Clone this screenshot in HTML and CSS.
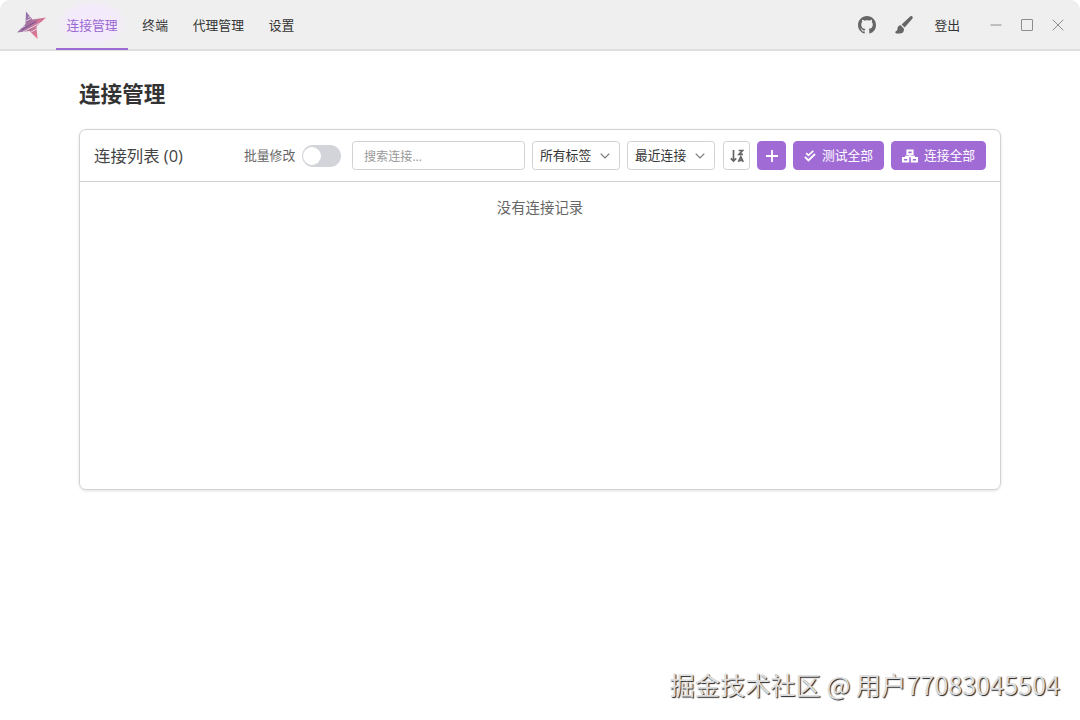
FILE: index.html
```html
<!DOCTYPE html>
<html lang="zh-CN">
<head>
    <meta charset="UTF-8">
    <meta name="viewport" content="width=device-width, initial-scale=1.0">
    <title>连接管理</title>
    <link rel="stylesheet" href="styles.css">
</head>
<body>
    <!-- 标题栏 -->
    <header class="titlebar">
        <svg class="logo" viewBox="0 0 30 30">
            <defs>
                <linearGradient id="star" x1="0" y1="0" x2="1" y2="0.6">
                    <stop offset="0.1" stop-color="#8379bd"/>
                    <stop offset="0.45" stop-color="#a0719f"/>
                    <stop offset="0.85" stop-color="#df7791"/>
                </linearGradient>
            </defs>
            <path d="M10 1.500 L16.500 9.500 L30 7.500 L20.500 16.500 L21.500 29 L13.500 21 L1 22.500 L9.500 14 Z" fill="url(#star)"/>
            <path d="M2 19.500 L9 16 M7 22 L25 12.500 M12 7.500 L17 5 M10 11 L15 8.500 M15 22 L24 17.500" fill="none" stroke="#efe6f1" stroke-width="0.8"/>
            <path d="M6 19.500 L20 11.500" fill="none" stroke="#744f93" stroke-width="1"/>
        </svg>
        <nav class="nav">
            <a class="nav-item active">连接管理</a>
            <a class="nav-item">终端</a>
            <a class="nav-item">代理管理</a>
            <a class="nav-item">设置</a>
        </nav>
        <div class="actions">
            <svg class="github" viewBox="0 0 16 16"><path d="M8 0C3.580 0 0 3.580 0 8c0 3.540 2.290 6.530 5.470 7.590.4.070.55-.17.55-.38 0-.19-.01-.82-.01-1.490-2.010.37-2.530-.49-2.690-.94-.09-.23-.48-.94-.82-1.130-.28-.15-.68-.52-.01-.53.63-.01 1.080.58 1.230.82.72 1.210 1.870.87 2.330.66.070-.52.28-.87.51-1.070-1.780-.2-3.640-.89-3.640-3.950 0-.87.31-1.590.82-2.150-.08-.2-.36-1.020.08-2.120 0 0 .67-.21 2.200.82.64-.18 1.320-.27 2-.27s1.360.09 2 .27c1.530-1.040 2.200-.82 2.200-.82.44 1.100.16 1.920.08 2.120.51.56.82 1.270.82 2.150 0 3.070-1.870 3.750-3.650 3.950.29.25.54.73.54 1.480 0 1.070-.01 1.930-.01 2.200 0 .21.15.46.55.38A8.010 8.010 0 0 0 16 8c0-4.420-3.580-8-8-8z"/></svg>
            <svg class="brush" viewBox="0 0 18 18"><path d="M17.300.5c-.6-.6-1.500-.5-2.200.1L6.600 8.500l3 3L17.300 2.700c.6-.7.600-1.600 0-2.200z"/><path d="M5.700 9.300c-2 0-3 1.300-3.200 3.200-.1 1.400-.4 2.300-1.600 2.700-.8.300-.9 2 .4 2.200h4.300c2.200-.1 3.500-1.800 3.400-4.700z"/></svg>
            <a class="logout">登出</a>
        </div>
        <div class="window-buttons">
            <svg viewBox="0 0 12 12"><path d="M.5 6h11"/></svg>
            <svg viewBox="0 0 12 12"><rect x=".5" y=".5" width="11" height="11" rx=".5"/></svg>
            <svg viewBox="0 0 12 12"><path d="M.7.7l10.600 10.600M11.300.7L.7 11.300"/></svg>
        </div>
    </header>

    <main class="page">
        <h1>连接管理</h1>

        <section class="card">
            <div class="card-header">
                <h2>连接列表 (0)</h2>
                <span class="batch-label">批量修改</span>
                <span class="switch"></span>
                <input class="search" type="text" placeholder="搜索连接...">
                <div class="select"><span>所有标签</span>
                    <svg viewBox="0 0 10 6"><path d="M.7.7L5 5 9.300.7"/></svg>
                </div>
                <div class="select"><span>最近连接</span>
                    <svg viewBox="0 0 10 6"><path d="M.7.7L5 5 9.300.7"/></svg>
                </div>
                <button class="btn-sort">
                    <svg viewBox="0 0 14 14"><path d="M3.500 1v11M.8 9.300l2.700 2.800 2.700-2.800M8.700 1.500h3.800L9 5.300h4M8.400 12.800l2.400-5 2.400 5M9.400 11.300h3"/></svg>
                </button>
                <button class="btn btn-add">
                    <svg viewBox="0 0 12 12"><path d="M6 0v12M0 6h12"/></svg>
                </button>
                <button class="btn btn-test">
                    <svg viewBox="0 0 12 12"><path d="M2.200 3.200l2.200 2.100L9.300.9M.9 6.900l3.500 3.500L11.100 4"/></svg>
                    <span>测试全部</span>
                </button>
                <button class="btn btn-connect">
                    <svg viewBox="0 0 16 14"><path class="line" d="M8 5v2.500M3.700 9.500v-2h8.600v2"/><path class="boxes" d="M5.400 1.400h5.200v3.800H5.400zM1 8.900h5.200v3.700H1zM9.800 8.900H15v3.700H9.800z"/></svg>
                    <span>连接全部</span>
                </button>
            </div>
            <div class="empty">没有连接记录</div>
        </section>
    </main>

    <div class="watermark">掘金技术社区 @ 用户77083045504</div>
</body>
</html>
```

FILE: styles.css
```css
* {
    box-sizing: border-box;
}

body {
    margin: 0;
    height: 720px;
    background: #fff;
    color: #333;
    font-family: "Open Sans", "Noto Sans CJK SC", sans-serif;
    font-size: 12.8px;
    overflow: hidden;
}

svg {
    display: block;
    flex: none;
}

/* 标题栏 */
.titlebar {
    display: flex;
    align-items: center;
    height: 51px;
    padding: 0 16px 0 16px;
    background: #efefef;
    border-bottom: 2px solid #dedede;
    border-radius: 10px 10px 0 0;
}

.logo {
    width: 30px;
    height: 30px;
    margin-right: 10px;
}

.nav {
    display: flex;
    gap: 4px;
    height: 51px;
}

.nav-item {
    padding: 1px 10.4px 0;
    height: 51px;
    line-height: 50px;
}

.nav-item.active {
    color: #9b69d2;
    background: radial-gradient(ellipse closest-side, #f5e9ff, #f3ebfa 70%, #efefef);
    border-bottom: 2px solid #9f6bd5;
}

.actions {
    display: flex;
    align-items: center;
    margin-left: auto;
    fill: #666;
}

.github {
    width: 18px;
    height: 18px;
    margin-right: 19px;
    margin-left: 1px;
}

.brush {
    width: 18px;
    height: 18px;
    margin-right: 21px;
}

.window-buttons {
    display: flex;
    gap: 19px;
    margin-left: 30px;
}

.window-buttons svg {
    width: 12px;
    height: 12px;
    fill: none;
    stroke: #8c8c8c;
    stroke-width: 1;
}

/* 内容 */
.page {
    padding: 26px 79px 0;
}

h1 {
    margin: 0 0 19px;
    font-size: 21.6px;
    line-height: 33px;
}

.card {
    height: 361px;
    border: 1px solid #d2d2d2;
    border-radius: 7px;
    box-shadow: 0 1px 3px rgba(0, 0, 0, 0.12);
}

.card-header {
    display: flex;
    align-items: center;
    height: 52px;
    padding: 0 14px;
    border-bottom: 1px solid #d2d2d2;
}

h2 {
    width: 150px;
    margin: -2px 0 0;
    color: #444;
    font-size: 16.4px;
    font-weight: 400;
}

.batch-label {
    width: 58px;
    margin-top: -2px;
    color: #666;
}

.switch {
    width: 39px;
    height: 22px;
    margin-right: 11px;
    padding: 2px 1px;
    background: #d2d4da;
    border-radius: 11px;
}

.switch::before {
    content: "";
    display: block;
    width: 18px;
    height: 18px;
    background: #fff;
    border-radius: 50%;
}

.search {
    width: 173px;
    height: 29px;
    margin-right: 7px;
    padding: 2px 11px 0;
    border: 1px solid #d2d2d2;
    border-radius: 3.5px;
    font: 12.1px "Open Sans", "Noto Sans CJK SC", sans-serif;
}

.search::placeholder {
    color: #999;
}

.select {
    display: flex;
    align-items: center;
    justify-content: space-between;
    width: 88px;
    height: 29px;
    margin-right: 7px;
    padding: 0 9px 0 7px;
    border: 1px solid #d2d2d2;
    border-radius: 3.5px;
    white-space: nowrap;
}

.select span,
.btn span {
    margin-top: -2px;
}

.select svg {
    width: 10px;
    height: 6px;
    fill: none;
    stroke: #777;
    stroke-width: 1.2;
}

.btn-sort {
    display: flex;
    align-items: center;
    justify-content: center;
    width: 27px;
    height: 29px;
    margin-right: 7px;
    margin-left: 1px;
    padding: 0;
    background: #fff;
    border: 1px solid #d2d2d2;
    border-radius: 3.5px;
}

.btn-sort svg {
    width: 14px;
    height: 14px;
    fill: none;
    stroke: #666;
    stroke-width: 1.7;
}

/* 紫色按钮 */
.btn {
    display: flex;
    align-items: center;
    justify-content: center;
    gap: 6px;
    height: 29px;
    padding: 0;
    color: #fff;
    background: #a06bd5;
    border: 0;
    border-radius: 4.5px;
    font: 12.8px "Open Sans", "Noto Sans CJK SC", sans-serif;
    white-space: nowrap;
}

.btn svg {
    width: 12px;
    height: 12px;
    fill: none;
    stroke: #fff;
    stroke-width: 1.8;
}

.btn-add {
    width: 29px;
    margin-right: 7px;
}

.btn-test {
    width: 91px;
    margin-right: 7px;
}

.btn-connect {
    width: 95px;
}

.btn-connect svg {
    width: 16px;
    height: 14px;
}

.btn-connect .line {
    stroke-width: 1.3;
}

.btn-connect .boxes {
    fill: #a06bd5;
    stroke-width: 2;
}

.empty {
    padding-top: 15px;
    color: #666;
    font-size: 14.4px;
    line-height: 22px;
    text-align: center;
}

/* 右下角水印 */
.watermark {
    position: absolute;
    right: 20px;
    bottom: 18px;
    color: #dedede;
    font-family: "Noto Sans CJK SC", sans-serif;
    font-size: 25.2px;
    line-height: 36px;
    white-space: nowrap;
    text-shadow: 1px 1px 1px #222;
}
```
